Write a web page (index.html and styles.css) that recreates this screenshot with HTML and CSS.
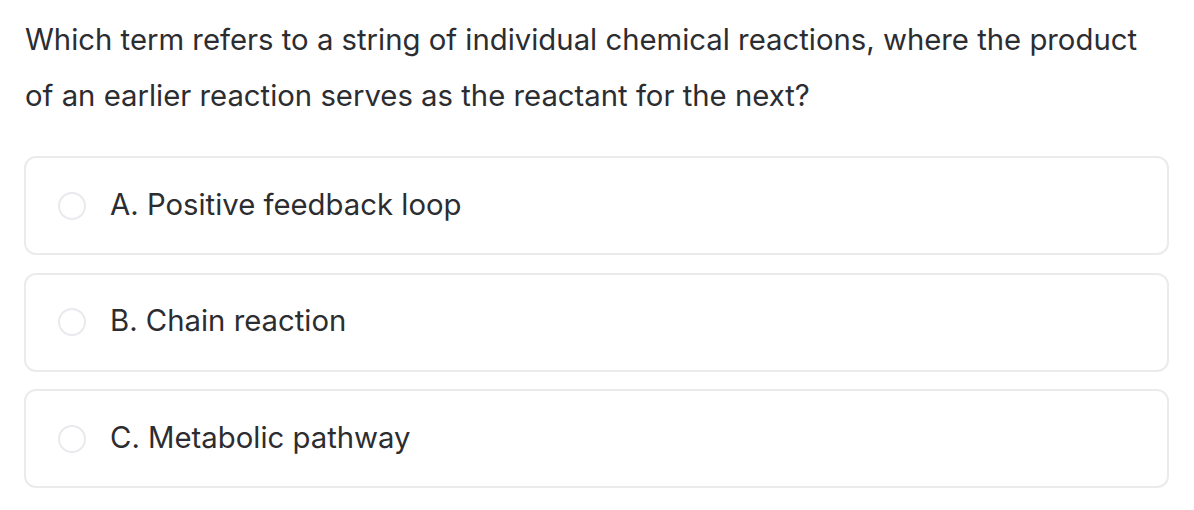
FILE: index.html
```html
<!DOCTYPE html>
<html lang="en">
<head>
<meta charset="utf-8">
<title>Question</title>
<link rel="stylesheet" href="styles.css">
</head>
<body>
<div class="quiz">
  <p class="question">Which term refers to a string of individual chemical reactions, where the product of an earlier reaction serves as the reactant for the next?</p>
  <div class="options">
    <label class="option"><span class="radio"></span><span class="label">A. Positive feedback loop</span></label>
    <label class="option"><span class="radio"></span><span class="label">B. Chain reaction</span></label>
    <label class="option"><span class="radio"></span><span class="label">C. Metabolic pathway</span></label>
  </div>
</div>
</body>
</html>
```
FILE: styles.css
```css
html, body {
  margin: 0;
  padding: 0;
  background: #ffffff;
}
body {
  font-family: Inter, "Liberation Sans", Arial, sans-serif;
  color: #2c2d31;
}
.quiz {
  padding: 12px 25px 0 24px;
}
.question {
  margin: 0 0 0 1px;
  font-size: 29.3px;
  line-height: 56px;
  max-width: 1125px;
}
.options {
  margin-top: 32px;
  display: flex;
  flex-direction: column;
  gap: 17.5px;
}
.option {
  display: flex;
  align-items: center;
  height: 95px;
  border: 2px solid #ebebed;
  border-radius: 12px;
  padding-left: 32px;
}
.radio {
  width: 24px;
  height: 24px;
  border: 2px solid #e9eaed;
  border-radius: 50%;
  flex: none;
}
.label {
  margin-left: 24px;
  margin-bottom: 3px;
  font-size: 29.3px;
}
```
